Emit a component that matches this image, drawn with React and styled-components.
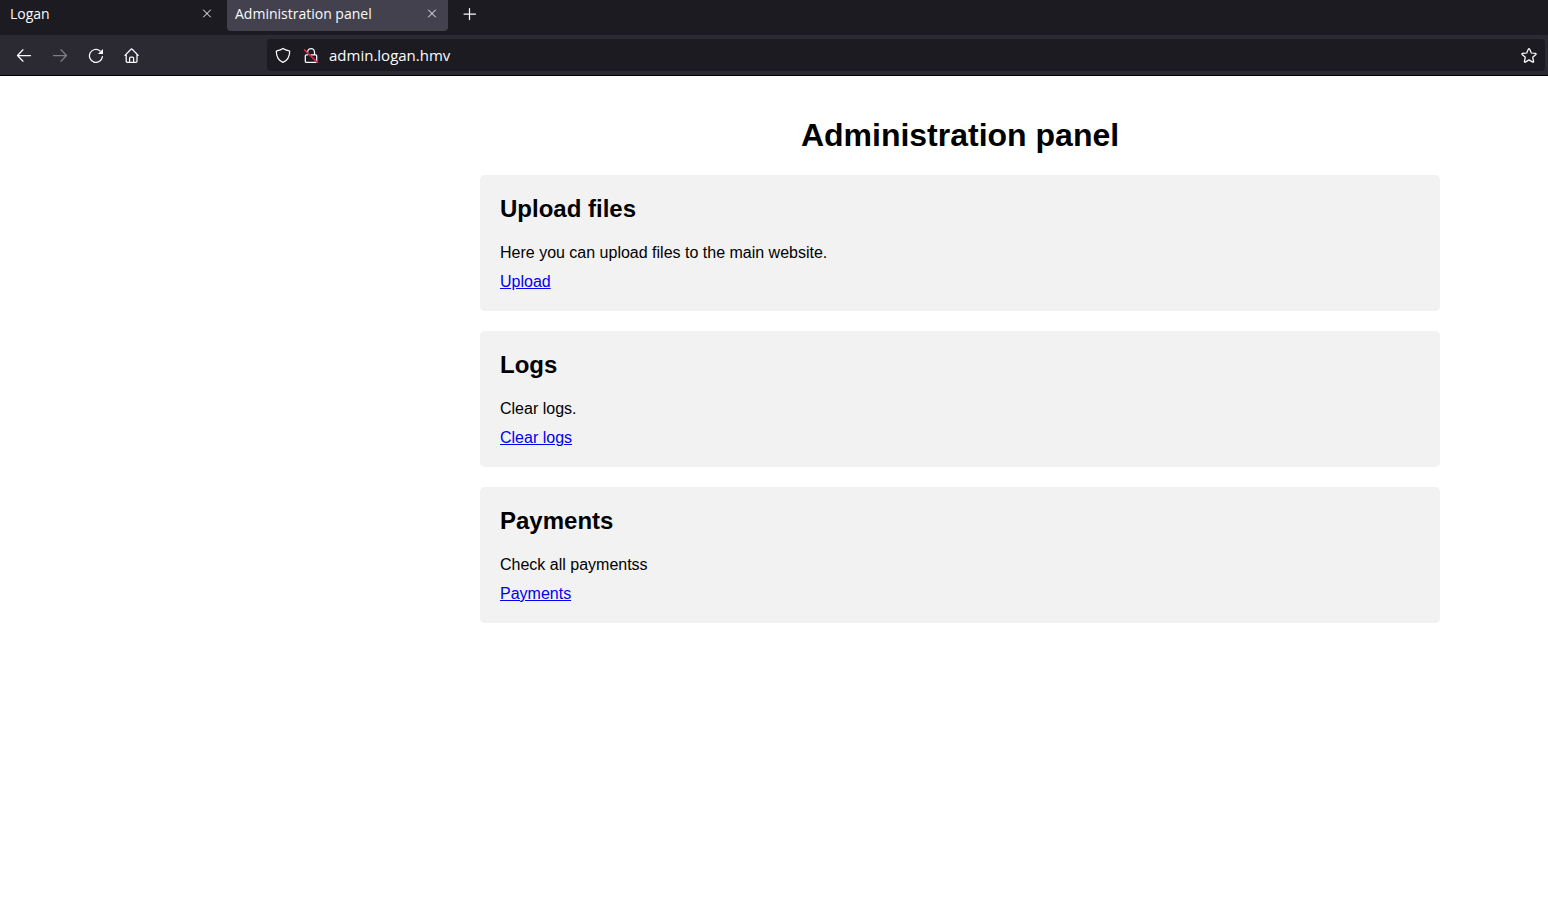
import React from "react";
import styled, { createGlobalStyle } from "styled-components";

const GlobalStyle = createGlobalStyle`
  *, *::before, *::after { box-sizing: border-box; }
  body { margin: 0; background: #ffffff; color: #000000; }
`;

const Chrome = styled.header`
  font-family: "Open Sans", "Noto Sans", sans-serif;
  color: #fbfbfe;
  border-bottom: 1px solid #000000;
`;

const TabStrip = styled.div`
  display: flex;
  align-items: flex-start;
  gap: 4px;
  height: 35px;
  padding-left: 2px;
  background: #1c1b22;
`;

const Tab = styled.div`
  display: flex;
  align-items: center;
  justify-content: space-between;
  width: 221px;
  height: 31px;
  padding: 0 8px 4px;
  border-radius: 0 0 4px 4px;
  background: ${({ $active }) => ($active ? "#42414d" : "transparent")};
`;

const PlainButton = styled.button`
  display: flex;
  align-items: center;
  justify-content: center;
  padding: 0;
  border: 0;
  background: none;
  color: inherit;
  font: inherit;
  cursor: pointer;
`;

const TabTitle = styled(PlainButton)`
  font-size: 14px;
  line-height: 20px;
`;

const NewTab = styled(PlainButton)`
  width: 36px;
  height: 27px;
`;

const Toolbar = styled.nav`
  display: flex;
  align-items: center;
  height: 40px;
  padding: 0 3px 0 6px;
  background: #2b2a33;
`;

const NavButton = styled(PlainButton)`
  width: 36px;
  height: 32px;
  &:disabled { opacity: 0.4; cursor: default; }
`;

const AddressBar = styled.form`
  display: flex;
  flex: 1;
  align-items: center;
  gap: 12px;
  height: 32px;
  margin-left: 117px;
  padding: 0 8px;
  border-radius: 4px;
  background: #1c1b22;
`;

const AddressInput = styled.input`
  flex: 1;
  min-width: 0;
  height: 24px;
  padding: 0;
  margin-left: -2px;
  border: 0;
  outline: 0;
  background: none;
  color: inherit;
  font-family: inherit;
  font-size: 15px;
`;

const Glyph = styled.svg.attrs({ viewBox: "0 0 16 16", width: 16, height: 16, "aria-hidden": true })`
  display: block;
  fill: none;
  stroke: currentColor;
  stroke-width: ${({ $thin }) => ($thin ? 1 : 1.25)};
  stroke-linecap: round;
  stroke-linejoin: round;
`;

const Page = styled.main`
  padding: 41px 108px 40px 480px;
  font-family: "Liberation Sans", Arial, sans-serif;
  font-size: 16px;
  line-height: 18px;
`;

const PageTitle = styled.h1`
  margin: 0 0 22px;
  font-size: 32px;
  line-height: 36px;
  text-align: center;
`;

const Sections = styled.div`
  display: grid;
  gap: 20px;
`;

const Card = styled.section`
  padding: 20px;
  border-radius: 5px;
  background: #f2f2f2;
`;

const CardTitle = styled.h2`
  margin: 0 0 21px;
  font-size: 24px;
  line-height: 28px;
`;

const CardText = styled.p`
  margin: 0 0 11px;
`;

const CardLink = styled.a`
  display: inline-block;
  color: #0000ee;
  vertical-align: top;
`;

const CloseIcon = () => (
  <Glyph $thin><path d="M4.500 4l7 7M11.500 4l-7 7" /></Glyph>
);

const sections = [
  { title: "Upload files", text: "Here you can upload files to the main website.", link: "Upload" },
  { title: "Logs", text: "Clear logs.", link: "Clear logs" },
  { title: "Payments", text: "Check all paymentss", link: "Payments" },
];

const tabs = [{ title: "Logan" }, { title: "Administration panel", active: true }];

export default function App() {
  return (
    <>
      <GlobalStyle />
      <Chrome>
        <TabStrip>
          {tabs.map((tab) => (
            <Tab key={tab.title} $active={tab.active}>
              <TabTitle type="button">{tab.title}</TabTitle>
              <PlainButton type="button" aria-label={`Close ${tab.title}`}><CloseIcon /></PlainButton>
            </Tab>
          ))}
          <NewTab type="button" aria-label="New tab">
            <Glyph><path d="M7.5 2.5v11M2 8h11.5" /></Glyph>
          </NewTab>
        </TabStrip>
        <Toolbar aria-label="Browser">
          <NavButton type="button" aria-label="Back">
            <Glyph><path d="M14.5 8.5H1.5M7 2.8L1.5 8.5 7 14.2" /></Glyph>
          </NavButton>
          <NavButton type="button" aria-label="Forward" disabled>
            <Glyph><path d="M1.5 8.5h13M9 2.8l5.5 5.7L9 14.2" /></Glyph>
          </NavButton>
          <NavButton type="button" aria-label="Reload">
            <Glyph>
              <path d="M14.4 9.600a6.500 6.500 0 1 1-2.300-5.700" />
              <path d="M15 2v5.100H9.900z" fill="currentColor" stroke="none" />
            </Glyph>
          </NavButton>
          <NavButton type="button" aria-label="Home">
            <Glyph>
              <path d="M1 8.400l6-6.200q.6-.6 1.200 0l6 6.200M2.200 7.300v7q0 1 1 1h8.800q1 0 1-1v-7M5.600 15v-4q0-1 1-1h2q1 0 1 1v4" />
            </Glyph>
          </NavButton>
          <AddressBar onSubmit={(event) => event.preventDefault()}>
            <Glyph>
              <path d="M8 1.400c-1.900 1.400-4.100 2-6.200 2.400-.3 0-.5.300-.5.600.1 4.800 2.200 9 6.700 10.900 4.500-1.900 6.600-6.100 6.700-10.900 0-.3-.2-.6-.5-.6C12.100 3.400 9.900 2.800 8 1.400z" />
            </Glyph>
            <Glyph>
              <path d="M4.600 5.200c0-4.800 6.900-4.800 6.900 0v2.600M8 7.800h4.700q1 0 1 1v5.600q0 1-1 1H3.300q-1 0-1-1V8.800q0-1 1-1h1.500" />
              <path d="M1.500 2.900l13 12.700" stroke="#e22850" strokeWidth="1.5" />
            </Glyph>
            <AddressInput type="text" aria-label="Address" defaultValue="admin.logan.hmv" spellCheck={false} />
            <PlainButton type="button" aria-label="Bookmark this page">
              <Glyph>
                <path d="M8 1.600q.4 0 .6.500l1.700 3.900 4.200.4c.6.100.8.700.4 1.100l-3.200 2.800.9 4.200c.1.600-.4.900-.9.600L8 12.900l-3.700 2.200c-.5.300-1 0-.9-.6l.9-4.200-3.200-2.800c-.4-.4-.2-1 .4-1.100l4.200-.4 1.700-3.900q.2-.5.600-.5z" />
              </Glyph>
            </PlainButton>
          </AddressBar>
        </Toolbar>
      </Chrome>
      <Page>
        <PageTitle>Administration panel</PageTitle>
        <Sections>
          {sections.map((section) => (
            <Card key={section.title}>
              <CardTitle>{section.title}</CardTitle>
              <CardText>{section.text}</CardText>
              <CardLink href="#">{section.link}</CardLink>
            </Card>
          ))}
        </Sections>
      </Page>
    </>
  );
}
